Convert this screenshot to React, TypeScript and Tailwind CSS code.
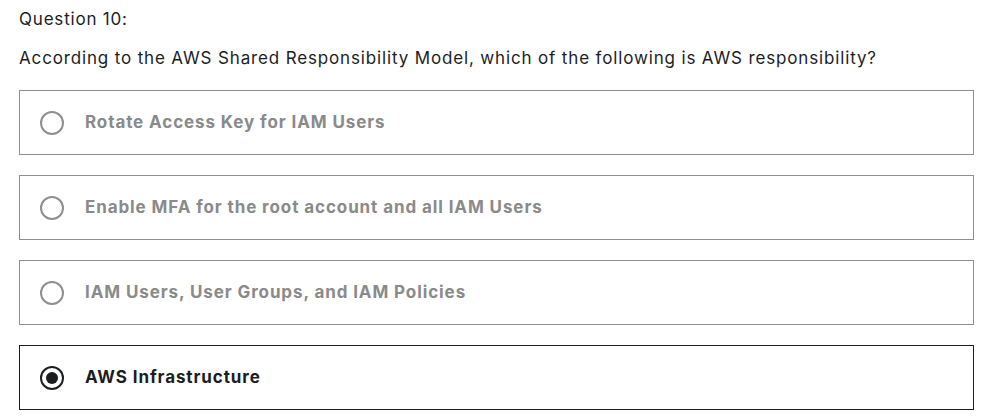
import React, { useState } from 'react';

const options = [
  'Rotate Access Key for IAM Users',
  'Enable MFA for the root account and all IAM Users',
  'IAM Users, User Groups, and IAM Policies',
  'AWS Infrastructure',
];

const Radio: React.FC<{ checked: boolean }> = ({ checked }) => (
  <span
    className={`flex h-[24px] w-[24px] shrink-0 items-center justify-center rounded-full border-2 ${
      checked ? 'border-[#1c1d1f]' : 'border-[#8f8f8f]'
    }`}
  >
    {checked && <span className="h-[12px] w-[12px] rounded-full bg-[#1c1d1f]" />}
  </span>
);

const App: React.FC = () => {
  const [selected, setSelected] = useState(3);

  return (
    <div className="min-h-screen bg-white px-[19px] pt-[7px] text-[#1c1d1f] font-['Inter',sans-serif]">
      <p className="text-[17px] leading-[24px] tracking-[0.8px]">Question 10:</p>
      <p className="mt-[15px] text-[17px] leading-[24px] tracking-[0.85px]">
        According to the AWS Shared Responsibility Model, which of the following is AWS responsibility?
      </p>
      <div className="mt-[20px] flex w-[955px] flex-col gap-[20px]">
        {options.map((opt, i) => {
          const checked = selected === i;
          return (
            <button
              key={opt}
              onClick={() => setSelected(i)}
              className={`flex h-[65px] items-center gap-[21px] border px-[20px] text-left ${
                checked ? 'border-[#1c1d1f]' : 'border-[#8f8f8f]'
              }`}
            >
              <Radio checked={checked} />
              <span
                className={`text-[17px] font-bold tracking-[0.9px] ${
                  checked ? 'text-[#1c1d1f]' : 'text-[#8a8a8a]'
                }`}
              >
                {opt}
              </span>
            </button>
          );
        })}
      </div>
    </div>
  );
};

export default App;
